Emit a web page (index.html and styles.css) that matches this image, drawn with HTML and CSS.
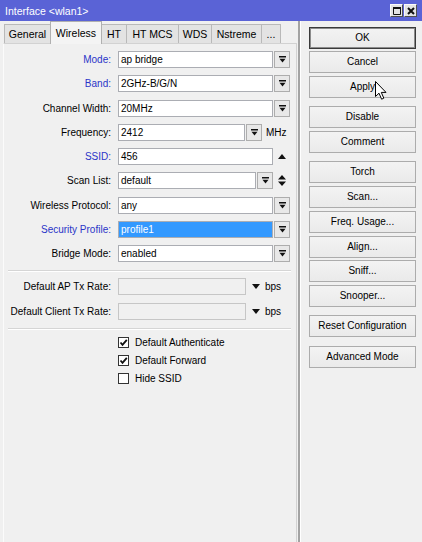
FILE: index.html
```html
<!DOCTYPE html>
<html lang="en">
<head>
  <meta charset="UTF-8">
  <title>Interface &lt;wlan1&gt;</title>
  <link rel="stylesheet" href="styles.css">
</head>
<body>
  <div class="window">
    <div class="titlebar">
      <span class="title">Interface &lt;wlan1&gt;</span>
      <div class="title-btns">
        <span class="tbtn"><svg width="8" height="8" viewBox="0 0 8 8"><path d="M0.5 0.5h7v7h-7z M0.5 1.5h7" fill="none" stroke="#111" stroke-width="1"/><rect x="0" y="0" width="8" height="2" fill="#111"/></svg></span>
        <span class="tbtn"><svg width="8" height="8" viewBox="0 0 8 8"><path d="M1 1L7 7M7 1L1 7" stroke="#111" stroke-width="2"/></svg></span>
      </div>
    </div>

    <div class="main">
      <div class="left">
        <div class="tabs">
          <span class="tab w-general">General</span>
          <span class="tab w-wireless active">Wireless</span>
          <span class="tab w-ht">HT</span>
          <span class="tab w-htmcs">HT MCS</span>
          <span class="tab w-wds">WDS</span>
          <span class="tab w-nstreme">Nstreme</span>
          <span class="tab w-more">...</span>
        </div>

        <div class="panel">
          <div class="rows main-rows">
            <div class="row">
              <span class="lbl blue">Mode:</span>
              <div class="field">ap bridge</div>
              <span class="dd"><svg width="7" height="7" viewBox="0 0 7 7"><rect width="7" height="1.5"/><path d="M0.5 2.8h6l-3 3.7z"/></svg></span>
            </div>
            <div class="row">
              <span class="lbl blue">Band:</span>
              <div class="field">2GHz-B/G/N</div>
              <span class="dd"><svg width="7" height="7" viewBox="0 0 7 7"><rect width="7" height="1.5"/><path d="M0.5 2.8h6l-3 3.7z"/></svg></span>
            </div>
            <div class="row">
              <span class="lbl">Channel Width:</span>
              <div class="field">20MHz</div>
              <span class="dd"><svg width="7" height="7" viewBox="0 0 7 7"><rect width="7" height="1.5"/><path d="M0.5 2.8h6l-3 3.7z"/></svg></span>
            </div>
            <div class="row">
              <span class="lbl">Frequency:</span>
              <div class="field freq">2412</div>
              <span class="dd"><svg width="7" height="7" viewBox="0 0 7 7"><rect width="7" height="1.5"/><path d="M0.5 2.8h6l-3 3.7z"/></svg></span>
              <span class="unit">MHz</span>
            </div>
            <div class="row">
              <span class="lbl blue">SSID:</span>
              <div class="field">456</div>
              <span class="arrow"><svg width="8" height="5" viewBox="0 0 8 5"><path d="M0 5L4 0L8 5z"/></svg></span>
            </div>
            <div class="row">
              <span class="lbl">Scan List:</span>
              <div class="field scan">default</div>
              <span class="dd"><svg width="7" height="7" viewBox="0 0 7 7"><rect width="7" height="1.5"/><path d="M0.5 2.8h6l-3 3.7z"/></svg></span>
              <span class="arrow"><svg width="8" height="11" viewBox="0 0 8 11"><path d="M0 4.5L4 0L8 4.5z M0 6.5H8L4 11z"/></svg></span>
            </div>
            <div class="row">
              <span class="lbl">Wireless Protocol:</span>
              <div class="field">any</div>
              <span class="dd"><svg width="7" height="7" viewBox="0 0 7 7"><rect width="7" height="1.5"/><path d="M0.5 2.8h6l-3 3.7z"/></svg></span>
            </div>
            <div class="row">
              <span class="lbl blue">Security Profile:</span>
              <div class="field selected">profile1</div>
              <span class="dd"><svg width="7" height="7" viewBox="0 0 7 7"><rect width="7" height="1.5"/><path d="M0.5 2.8h6l-3 3.7z"/></svg></span>
            </div>
            <div class="row">
              <span class="lbl">Bridge Mode:</span>
              <div class="field">enabled</div>
              <span class="dd"><svg width="7" height="7" viewBox="0 0 7 7"><rect width="7" height="1.5"/><path d="M0.5 2.8h6l-3 3.7z"/></svg></span>
            </div>
          </div>

          <div class="sep sep-first"></div>

          <div class="rows">
            <div class="row">
              <span class="lbl">Default AP Tx Rate:</span>
              <div class="field tx"></div>
              <span class="arrow tx-arrow"><svg width="8" height="5" viewBox="0 0 8 5"><path d="M0 0H8L4 5z"/></svg></span>
              <span class="unit bps">bps</span>
            </div>
            <div class="row">
              <span class="lbl">Default Client Tx Rate:</span>
              <div class="field tx"></div>
              <span class="arrow tx-arrow"><svg width="8" height="5" viewBox="0 0 8 5"><path d="M0 0H8L4 5z"/></svg></span>
              <span class="unit bps">bps</span>
            </div>
          </div>

          <div class="sep sep-second"></div>

          <div class="checks">
            <div class="check"><span class="box"><svg width="9" height="9" viewBox="0 0 9 9"><path d="M1.5 4.5L3.5 6.8L7.8 1.8" fill="none" stroke="#111" stroke-width="1.8"/></svg></span>Default Authenticate</div>
            <div class="check"><span class="box"><svg width="9" height="9" viewBox="0 0 9 9"><path d="M1.5 4.5L3.5 6.8L7.8 1.8" fill="none" stroke="#111" stroke-width="1.8"/></svg></span>Default Forward</div>
            <div class="check"><span class="box"></span>Hide SSID</div>
          </div>
        </div>
      </div>

      <div class="right">
        <div class="group">
          <div class="btn default">OK</div>
          <div class="btn">Cancel</div>
          <div class="btn">Apply</div>
        </div>
        <div class="group">
          <div class="btn">Disable</div>
          <div class="btn">Comment</div>
        </div>
        <div class="group">
          <div class="btn">Torch</div>
          <div class="btn">Scan...</div>
          <div class="btn">Freq. Usage...</div>
          <div class="btn">Align...</div>
          <div class="btn">Sniff...</div>
          <div class="btn">Snooper...</div>
        </div>
        <div class="group">
          <div class="btn">Reset Configuration</div>
        </div>
        <div class="group">
          <div class="btn">Advanced Mode</div>
        </div>
      </div>
    </div>

    <svg class="cursor" width="13" height="20" viewBox="0 0 13 20"><path d="M0.5 0.5L0.5 15.5L4 12.2L6.6 18.2L8.8 17.2L6.3 11.4L11 11.4Z" fill="#fff" stroke="#000" stroke-width="1" stroke-linejoin="round"/></svg>
  </div>
</body>
</html>
```

FILE: styles.css
```css
body {
  margin: 0;
  font-family: "Liberation Sans", Arial, sans-serif;
  font-size: 10px;
  color: #000;
  background-color: #f0f0f0;
}
.window {
  position: relative;
  width: 422px;
  height: 542px;
  overflow: hidden;
  background-color: #f0f0f0;
}
.titlebar {
  height: 21px;
  background-color: #5a63d6;
  color: #fff;
  display: flex;
  align-items: center;
  justify-content: space-between;
  padding: 0 5px;
}
.title {
  font-size: 10.5px;
}
.title-btns {
  display: flex;
  gap: 1px;
}
.tbtn {
  width: 13px;
  height: 13px;
  box-sizing: border-box;
  background-color: #e4e4e4;
  border: 1px solid #fafafa;
  border-right-color: #505050;
  border-bottom-color: #505050;
  display: flex;
  align-items: center;
  justify-content: center;
}
.main {
  display: flex;
  height: 521px;
}
.left {
  width: 298px;
  flex: none;
}
.tabs {
  display: flex;
  align-items: flex-end;
  height: 22px;
  padding-left: 4px;
}
.tab {
  height: 19px;
  box-sizing: border-box;
  border: 1px solid #b9b9b9;
  border-bottom: none;
  margin-right: -1px;
  background-color: #e3e3e3;
  display: flex;
  align-items: center;
  justify-content: center;
  white-space: nowrap;
  font-size: 10.5px;
}
.tab.active {
  position: relative;
  z-index: 1;
  height: 23px;
  margin-bottom: -1px;
  background-color: #f4f4f4;
  border-color: #b0b0b0;
}
.w-general { width: 47px; }
.w-wireless { width: 52px; }
.w-ht { width: 26px; }
.w-htmcs { width: 53px; }
.w-wds { width: 34px; }
.w-nstreme { width: 51px; }
.w-more { width: 20px; }
.panel {
  margin-left: 3px;
  width: 294px;
  height: 499px;
  box-sizing: border-box;
  border: 1px solid #d2d2d2;
  border-left-color: #fbfbfb;
  border-bottom: none;
  padding-top: 7px;
}
.rows {
  display: flex;
  flex-direction: column;
  gap: 7.5px;
}
.main-rows {
  gap: 7.25px;
}
.row {
  display: flex;
  align-items: center;
  height: 17px;
}
.lbl {
  width: 107px;
  margin-right: 7px;
  text-align: right;
  white-space: nowrap;
}
.lbl.blue {
  color: #2a35c8;
}
.field {
  width: 155px;
  height: 17px;
  box-sizing: border-box;
  border: 1px solid #abadb3;
  background-color: #fff;
  padding-left: 2px;
  line-height: 15px;
  white-space: nowrap;
}
.field.freq { width: 127px; }
.field.scan { width: 138px; }
.field.tx {
  width: 128px;
  background-color: #f0f0f0;
  border-color: #c6c6c6;
}
.field.selected {
  background-color: #3399ff;
  color: #fff;
}
.dd {
  width: 16px;
  height: 17px;
  box-sizing: border-box;
  margin-left: 1px;
  border: 1px solid #adadad;
  background-color: #e8e8e8;
  display: flex;
  align-items: center;
  justify-content: center;
}
.dd svg {
  fill: #111;
}
.arrow {
  margin-left: 5px;
  display: flex;
  align-items: center;
}
.arrow svg {
  fill: #111;
}
.tx-arrow {
  margin-left: 6px;
}
.unit {
  margin-left: 4px;
}
.unit.bps {
  margin-left: 5px;
}
.sep {
  height: 0;
  border-top: 1px solid #d5d5d5;
  border-bottom: 1px solid #fff;
  margin-left: 4px;
  margin-right: 5px;
}
.sep-first {
  margin-top: 8px;
  margin-bottom: 6px;
}
.sep-second {
  margin-top: 8.5px;
  margin-bottom: 3.5px;
}
.checks {
  display: flex;
  flex-direction: column;
  padding-left: 114px;
}
.check {
  display: flex;
  align-items: center;
  height: 18px;
  white-space: nowrap;
}
.box {
  width: 11px;
  height: 11px;
  box-sizing: border-box;
  margin-right: 6px;
  border: 1px solid #333;
  background-color: #fff;
  display: flex;
  align-items: center;
  justify-content: center;
}
.right {
  flex: 1;
  border-left: 2px solid #a3a3a3;
  box-shadow: inset 1px 0 #fff;
  padding: 5.5px 0 0 9px;
  display: flex;
  flex-direction: column;
}
.group {
  display: flex;
  flex-direction: column;
  gap: 2.8px;
}
.group + .group {
  margin-top: 8.2px;
}
.btn {
  width: 107px;
  height: 22px;
  box-sizing: border-box;
  border: 1px solid #acacac;
  background: linear-gradient(#f3f3f3, #eaeaea);
  text-align: center;
  line-height: 20px;
  white-space: nowrap;
}
.btn.default {
  border-color: #3a3a3a;
  box-shadow: inset 0 0 0 1px #8c8c8c;
}
.cursor {
  position: absolute;
  left: 375px;
  top: 81px;
}
```
